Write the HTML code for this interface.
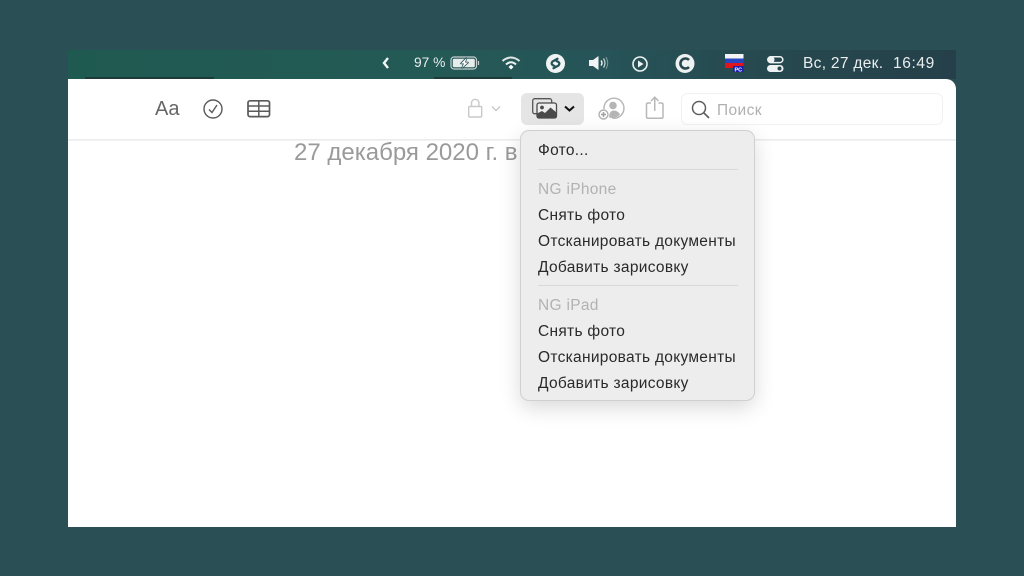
<!DOCTYPE html>
<html><head><meta charset="utf-8">
<style>
html,body{margin:0;padding:0;width:1024px;height:576px;overflow:hidden;background:#2a4f54;font-family:"Liberation Sans",sans-serif}
.a{position:absolute;white-space:nowrap}
#bar{position:absolute;left:68px;top:50px;width:888px;height:29px;background:linear-gradient(90deg,#1f5a50 0%,#245a56 40%,#265458 60%,#26484f 80%,#25404a 100%)}
#win{position:absolute;left:68px;top:78.500px;width:888px;height:448px;background:#fff;border-top-right-radius:10px;overflow:hidden}
#tb{position:absolute;left:68px;top:139px;width:888px;height:2px;background:linear-gradient(#e9e9e9,#f5f5f5)}
.m{font-size:15.500px;color:#e9eeee}
#menu{position:absolute;left:521px;top:131px;width:233px;height:269px;background:#ededed;border-radius:8px;box-shadow:0 0 0 1px #d0d0d0,0 7px 22px rgba(0,0,0,.16)}
.i{position:absolute;left:17px;font-size:15.500px;letter-spacing:.3px;line-height:18px;color:#2a2a2a;white-space:nowrap}
.g{color:#b2b2b2}
.s{position:absolute;left:17px;width:200px;height:1px;background:#d9d9d9}
svg{position:absolute;overflow:visible}
</style></head><body>
<div id="bar"></div>
<div id="win"></div>
<div id="tb"></div>
<div class="a" style="left:85px;top:77px;width:129px;height:1.500px;background:#1f3a3a"></div>
<div class="a" style="left:434px;top:77px;width:78px;height:1.500px;background:#1f3a3a"></div>

<svg style="left:381px;top:56px" width="10" height="14" viewBox="0 0 10 14"><path d="M7 2 L3 7 L7 12" fill="none" stroke="#f4f7f7" stroke-width="2.400"/></svg>
<div class="a m" style="left:414px;top:55px;font-size:13.800px">97 %</div>
<svg style="left:450px;top:56px" width="30" height="14" viewBox="0 0 30 14"><rect x="1" y="1" width="25.500" height="12" rx="3" fill="none" stroke="#c6d0d0" stroke-width="1.200"/><rect x="2.800" y="2.800" width="22" height="8.400" rx="1.500" fill="#e6ebeb"/><path d="M16.500 2 L11 7.500 H14 L12 12 L18 6.500 H15 Z" fill="#fff" stroke="#25555a" stroke-width="1.600" stroke-linejoin="round" paint-order="stroke"/><path d="M28.500 5 V9" stroke="#c5d0d0" stroke-width="1.200"/></svg>
<svg style="left:501px;top:55px" width="20" height="16" viewBox="0 0 20 16"><path d="M1.500 6 Q10 -1 18.500 6" fill="none" stroke="#dfe6e6" stroke-width="2"/><path d="M5 9.500 Q10 5 15 9.500" fill="none" stroke="#eef2f2" stroke-width="2"/><path d="M7.500 12 L10 9.800 L12.500 12 L10 14.500 Z" fill="#fff"/></svg>
<svg style="left:546px;top:54px" width="19" height="19" viewBox="0 0 19 19"><circle cx="9.500" cy="9.500" r="9.500" fill="#f1f4f4"/><path d="M11.500 4.800 L6.500 7.500 Q4.500 9.700 7 11.300 L8.500 12" fill="none" stroke="#265258" stroke-width="2.300" stroke-linecap="round"/><path d="M7.500 14.200 L12.500 11.500 Q14.500 9.300 12 7.700 L10.500 7" fill="none" stroke="#265258" stroke-width="2.300" stroke-linecap="round"/></svg>
<svg style="left:589px;top:55px" width="22" height="16" viewBox="0 0 22 16"><path d="M0 5 H4 L9.500 1 V15 L4 11 H0 Z" fill="#f1f4f4"/><path d="M12 5.500 Q14 8 12 10.500" fill="none" stroke="#e6ecec" stroke-width="1.500"/><path d="M14.500 3.500 Q17.500 8 14.500 12.500" fill="none" stroke="#c5d0d0" stroke-width="1.300"/><path d="M17 2 Q20.500 8 17 14" fill="none" stroke="#7f9a9c" stroke-width="1"/></svg>
<svg style="left:632px;top:56px" width="16" height="16" viewBox="0 0 16 16"><circle cx="8" cy="8" r="7" fill="none" stroke="#eef2f2" stroke-width="1.600"/><path d="M6 4.500 L11.500 8 L6 11.500 Z" fill="#eef2f2"/></svg>
<svg style="left:675px;top:54px" width="20" height="19" viewBox="0 0 20 19"><circle cx="10" cy="9.500" r="9.500" fill="#eef1f1"/><path d="M14 6 A5 5 0 1 0 14 13" fill="none" stroke="#27474f" stroke-width="2.600"/></svg>
<svg style="left:725px;top:54px" width="19" height="19" viewBox="0 0 19 19"><rect x="0" y="0" width="18.500" height="4.500" fill="#f4f4f4"/><rect x="0" y="4.500" width="18.500" height="4.500" fill="#2a45c0"/><rect x="0" y="9" width="18.500" height="5" fill="#e0141c"/><rect x="8" y="12" width="10.500" height="6" fill="#1a1fb0"/><text x="13.300" y="17.500" font-family="Liberation Sans" font-size="5.500" font-weight="700" fill="#fff" text-anchor="middle">PC</text></svg>
<svg style="left:767px;top:56px" width="17" height="17" viewBox="0 0 17 17"><rect x=".8" y=".8" width="15" height="5.800" rx="2.900" fill="none" stroke="#eef2f2" stroke-width="1.500"/><circle cx="4" cy="3.700" r="3.500" fill="#eef2f2"/><rect x="0" y="9" width="16.500" height="7" rx="3.500" fill="#eef2f2"/><circle cx="12.500" cy="12.500" r="2" fill="#26454e"/></svg>
<div class="a m" style="left:803px;top:54.500px;letter-spacing:.3px">Вс, 27 дек.</div>
<div class="a m" style="left:893px;top:54.500px;letter-spacing:.6px">16:49</div>

<div class="a" style="left:155px;top:98px;font-size:20px;color:#666">Aa</div>
<svg style="left:203px;top:99px" width="20" height="20" viewBox="0 0 20 20"><circle cx="10" cy="10" r="9" fill="none" stroke="#5a5a5a" stroke-width="1.400"/><path d="M6 10.500 L9 13.500 L14 6" fill="none" stroke="#5a5a5a" stroke-width="1.400"/></svg>
<svg style="left:247px;top:100px" width="24" height="18" viewBox="0 0 24 18"><rect x="1" y=".8" width="21.500" height="15.800" rx="2" fill="none" stroke="#5a5a5a" stroke-width="1.700"/><path d="M1 6 H22.500 M1 11.200 H22.500 M11.800 1 V16.500" stroke="#5a5a5a" stroke-width="1.500"/></svg>

<svg style="left:468px;top:98px" width="36" height="22" viewBox="0 0 36 22"><rect x=".7" y="8.500" width="13" height="10.500" rx="1" fill="none" stroke="#c9c9c9" stroke-width="1.400"/><path d="M3.500 8.500 V5 A3.700 3.700 0 0 1 10.900 5 V8.500" fill="none" stroke="#c9c9c9" stroke-width="1.400"/><path d="M24 8.500 L28 12.500 L32 8.500" fill="none" stroke="#c9c9c9" stroke-width="1.500"/></svg>
<div class="a" style="left:521px;top:93px;width:63px;height:32px;background:#e5e5e5;border-radius:6px"></div>
<svg style="left:532px;top:98px" width="46" height="22" viewBox="0 0 46 22"><rect x=".7" y=".7" width="19" height="15" rx="2" fill="none" stroke="#555" stroke-width="1.300"/><rect x="5" y="5" width="19.500" height="15" rx="2" fill="#ededed" stroke="#4a4a4a" stroke-width="1.300"/><circle cx="10" cy="9.500" r="1.900" fill="#4a4a4a"/><path d="M5 20 V15.500 L10 13 L13 15 L18.500 9.500 L24.500 14.500 V20 Z" fill="#4a4a4a"/><path d="M33 8.500 L37.500 12.500 L42 8.500" fill="none" stroke="#111" stroke-width="2.100"/></svg>
<svg style="left:598px;top:97px" width="26" height="24" viewBox="0 0 26 24"><path d="M6 12 A10 10 0 1 1 14 21" fill="none" stroke="#b5b5b5" stroke-width="1.400"/><circle cx="15" cy="8.500" r="3.800" fill="#b5b5b5"/><path d="M11 20.500 Q11.500 13.500 15.500 13.500 Q20 13.500 22 17.500 Q19 21 14 21 Z" fill="#b5b5b5"/><circle cx="5.500" cy="17.500" r="4.500" fill="#fff" stroke="#b0b0b0" stroke-width="1.400"/><path d="M3 17.500 H8 M5.500 15 V20" stroke="#a0a0a0" stroke-width="1.500"/></svg>
<svg style="left:645px;top:96px" width="20" height="24" viewBox="0 0 20 24"><path d="M6 7 H3 Q1.500 7 1.500 8.500 V21 Q1.500 22.300 3 22.300 H16.500 Q18 22.300 18 21 V8.500 Q18 7 16.500 7 H13.500" fill="none" stroke="#b8b8b8" stroke-width="1.500"/><path d="M9.750 15 V1.500 M6 5 L9.750 1.200 L13.500 5" fill="none" stroke="#b8b8b8" stroke-width="1.500"/></svg>

<div class="a" style="left:681px;top:93px;width:260px;height:30px;border:1px solid #f1f1f1;border-radius:6px"></div>
<svg style="left:691px;top:100px" width="20" height="20" viewBox="0 0 20 20"><circle cx="8" cy="8" r="6.500" fill="none" stroke="#5e5e5e" stroke-width="1.500"/><path d="M12.800 12.800 L18 18" stroke="#5e5e5e" stroke-width="1.700"/></svg>
<div class="a" style="left:717px;top:102px;font-size:15.500px;letter-spacing:.4px;color:#b0b0b0">Поиск</div>

<div class="a" style="left:294px;top:139px;font-size:24px;color:#9a9a9a">27 декабря 2020 г. в</div>

<div id="menu">
<div class="i" style="top:11px">Фото...</div>
<div class="s" style="top:38px"></div>
<div class="i g" style="top:50px">NG iPhone</div>
<div class="i" style="top:76px">Снять фото</div>
<div class="i" style="top:102px">Отсканировать документы</div>
<div class="i" style="top:128px">Добавить зарисовку</div>
<div class="s" style="top:154px"></div>
<div class="i g" style="top:166px">NG iPad</div>
<div class="i" style="top:192px">Снять фото</div>
<div class="i" style="top:218px">Отсканировать документы</div>
<div class="i" style="top:244px">Добавить зарисовку</div>
</div>
</body></html>
